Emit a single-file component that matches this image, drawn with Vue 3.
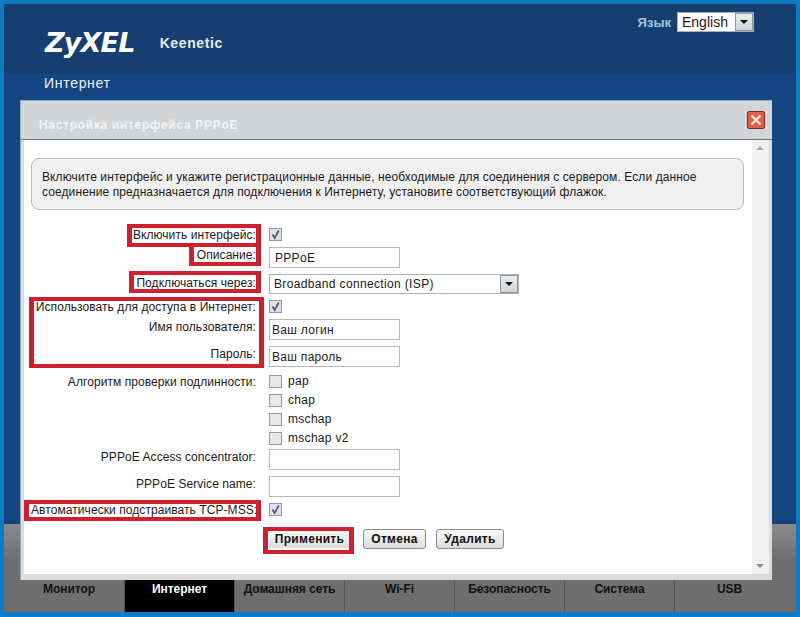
<template>
  <div class="page">
    <header class="top">
      <div class="brand">
        <span class="logo">ZyXEL</span>
        <span class="model">Keenetic</span>
      </div>
      <div class="lang">
        <span class="lang-label">Язык</span>
        <div class="select lang-select">
          <span class="select-text">English</span>
          <span class="select-arrow"><i></i></span>
        </div>
      </div>
    </header>

    <div class="content">
      <div class="section-title">Интернет</div>
    </div>

    <div class="footer">
      <nav class="tabs">
        <div
          v-for="tab in tabs"
          :key="tab"
          class="tab"
          :class="{ active: tab === 'Интернет' }"
        >
          {{ tab }}
        </div>
      </nav>
    </div>

    <div class="dialog">
      <div class="dialog-title">
        <span>Настройка интерфейса PPPoE</span>
        <button class="close">
          <svg width="14" height="14" viewBox="0 0 14 14">
            <path d="M2.5 2.5L11.5 11.5M11.5 2.5L2.5 11.5" stroke="#fbe6df" stroke-width="2.4" fill="none" />
          </svg>
        </button>
      </div>

      <div class="dialog-body">
        <div class="scroll-content">
          <div class="hint">
            Включите интерфейс и укажите регистрационные данные, необходимые для соединения с сервером. Если данное соединение предназначается для подключения к Интернету, установите соответствующий флажок.
          </div>

          <div class="form">
            <div
              v-for="row in rows"
              :key="row.id"
              class="row"
              :class="['gap' + row.gap, { 'input-row': row.type === 'input', 'select-row': row.type === 'select' }]"
            >
              <label class="label">{{ row.label }}</label>
              <div class="control">
                <template v-if="row.type === 'check'">
                  <span class="check" :class="{ on: row.on }">
                    <svg v-if="row.on" width="11" height="11" viewBox="0 0 11 11">
                      <path d="M2.5 5.5L4.6 9L8.8 1.5" stroke="#4a5a78" stroke-width="1.7" fill="none" />
                    </svg>
                  </span>
                  <span v-if="row.text" class="check-text">{{ row.text }}</span>
                </template>
                <div v-else-if="row.type === 'input'" class="input" :class="{ inset: row.inset }">{{ row.value }}</div>
                <div v-else class="select form-select">
                  <span class="select-text">{{ row.value }}</span>
                  <span class="select-arrow"><i></i></span>
                </div>
              </div>
            </div>

            <div class="actions">
              <button class="btn apply">Применить</button>
              <button class="btn cancel">Отмена</button>
              <button class="btn remove">Удалить</button>
            </div>
          </div>
        </div>

        <div class="scrollbar">
          <i class="up"></i>
          <i class="down"></i>
        </div>
      </div>

      <!-- red annotations drawn on top of the screenshot -->
      <div class="mark m1"></div>
      <div class="mark m2"></div>
      <div class="mark m3"></div>
      <div class="mark m4"></div>
      <div class="mark m5"></div>
      <div class="mark m6"></div>
    </div>
  </div>
</template>

<script setup>
const tabs = ["Монитор", "Интернет", "Домашняя сеть", "Wi-Fi", "Безопасность", "Система", "USB"];

const rows = [
  { id: 1, gap: 0, label: "Включить интерфейс:", type: "check", on: true },
  { id: 2, gap: 4, label: "Описание:", type: "input", value: "PPPoE", inset: true },
  { id: 3, gap: 8, label: "Подключаться через:", type: "select", value: "Broadband connection (ISP)" },
  { id: 4, gap: 3, label: "Использовать для доступа в Интернет:", type: "check", on: true },
  { id: 5, gap: 4, label: "Имя пользователя:", type: "input", value: "Ваш логин" },
  { id: 6, gap: 8, label: "Пароль:", type: "input", value: "Ваш пароль" },
  { id: 7, gap: 6, label: "Алгоритм проверки подлинности:", type: "check", text: "pap" },
  { id: 8, gap: 0, label: "", type: "check", text: "chap" },
  { id: 9, gap: 0, label: "", type: "check", text: "mschap" },
  { id: 10, gap: 0, label: "", type: "check", text: "mschap v2" },
  { id: 11, gap: 2, label: "PPPoE Access concentrator:", type: "input", value: "" },
  { id: 12, gap: 8, label: "PPPoE Service name:", type: "input", value: "" },
  { id: 13, gap: 4, label: "Автоматически подстраивать TCP-MSS:", type: "check", on: true },
];
</script>

<style>
html,
body {
  margin: 0;
  background: #0e7cc2;
}
</style>

<style scoped>
.page {
  position: relative;
  box-sizing: border-box;
  width: 800px;
  height: 617px;
  padding: 4px 4px 5px;
  display: flex;
  flex-direction: column;
  background: #0e7cc2;
  font-family: "Liberation Sans", Arial, sans-serif;
  font-size: 12px;
  color: #1a1a1a;
  overflow: hidden;
}

.top {
  height: 69px;
  flex: none;
  box-sizing: border-box;
  display: flex;
  justify-content: space-between;
  align-items: flex-start;
  background: #163f70;
  padding: 8px 42px 0 41px;
}

.brand {
  display: flex;
  align-items: center;
  margin-top: 16px;
  gap: 25px;
}

.logo {
  font-family: "DejaVu Sans", sans-serif;
  font-weight: 700;
  font-style: italic;
  font-size: 27px;
  letter-spacing: -0.8px;
  line-height: 30px;
  color: #fff;
}

.model {
  color: #e6eef5;
  font-weight: 700;
  font-size: 14px;
  letter-spacing: 0.6px;
}

.lang {
  display: flex;
  align-items: center;
  gap: 6px;
}

.lang-label {
  color: #a4c2e0;
  font-weight: 700;
  font-size: 13px;
}

.select {
  box-sizing: border-box;
  display: flex;
  align-items: center;
  justify-content: space-between;
  background: #fff;
  border: 1px solid #a8b0b8;
  font-size: 14px;
  color: #1a1a1a;
}

.lang-select {
  width: 77px;
  height: 20px;
  padding-left: 4px;
}

.select-arrow {
  box-sizing: border-box;
  width: 18px;
  height: 100%;
  display: flex;
  align-items: center;
  justify-content: center;
  background: linear-gradient(#eceef1, #cfd3d9);
  border: 1px solid #8a95a3;
}

.select-arrow i {
  border-left: 4px solid transparent;
  border-right: 4px solid transparent;
  border-top: 4px solid #111;
}

.content {
  flex: 1;
  background: #144582;
  padding-left: 40px;
}

.section-title {
  color: #eef3f8;
  font-size: 14px;
  letter-spacing: 0.7px;
  line-height: 20px;
}

.footer {
  height: 88px;
  flex: none;
  display: flex;
  align-items: flex-end;
  background: linear-gradient(#8a8a8a, #6e6e6e 40%);
}

.tabs {
  display: grid;
  grid-template-columns: repeat(7, 110px);
  margin-left: 10px;
  height: 32px;
}

.tab {
  box-sizing: border-box;
  border-left: 1px solid #555;
  padding-top: 2px;
  text-align: center;
  font-weight: 700;
  font-size: 12px;
  letter-spacing: -0.05px;
  line-height: 15px;
  color: #111;
}

.tab:first-child {
  border-left: 0;
}

.tab.active {
  background: #000;
  color: #fff;
}

.dialog {
  position: absolute;
  left: 20px;
  top: 100px;
  width: 752px;
  height: 480px;
  box-sizing: border-box;
  display: flex;
  flex-direction: column;
  background: #dcdcdc;
  border-top: 1px solid #8fa9bd;
  border-left: 1px solid #8fa9bd;
}

.dialog-title {
  height: 39px;
  flex: none;
  box-sizing: border-box;
  display: flex;
  align-items: center;
  justify-content: space-between;
  padding: 10px 7px 0 18px;
  background: #d3d6d8;
  border-bottom: 1px solid #5d7282;
  color: #f2f4f5;
  font-weight: 700;
  font-size: 12px;
  letter-spacing: 0.7px;
}

.close {
  width: 18px;
  height: 18px;
  margin-top: -10px;
  padding: 0;
  display: flex;
  align-items: center;
  justify-content: center;
  background: #df5f4b;
  border: 1px solid #7e2a1e;
  border-radius: 2px;
}

.dialog-body {
  flex: 1;
  min-height: 0;
  display: flex;
  margin: 0 3px 6px 3px;
  background: #fff;
}

.scroll-content {
  flex: 1;
  min-width: 0;
  padding: 18px 6px 0 7px;
}

.hint {
  box-sizing: border-box;
  width: 713px;
  height: 52px;
  padding: 11px 10px 0;
  background: #f0f0f0;
  border: 1px solid #bbb;
  border-radius: 8px;
  font-size: 12px;
  line-height: 15px;
  letter-spacing: 0.1px;
}

.form {
  margin-top: 14.5px;
}

.row {
  display: flex;
  align-items: center;
  height: 19px;
}

.gap2 { margin-top: 2px; }
.gap3 { margin-top: 3px; }
.gap4 { margin-top: 4px; }
.gap6 { margin-top: 6px; }
.gap8 { margin-top: 8px; }

.label {
  width: 225px;
  flex: none;
  text-align: right;
  white-space: nowrap;
  letter-spacing: 0.07px;
  line-height: 14px;
  padding-top: 1px;
}

.input-row .label {
  padding-top: 0;
  padding-bottom: 4px;
}

.select-row .label {
  padding-top: 0;
  padding-bottom: 3px;
}

.control {
  margin-left: 13px;
  display: flex;
  align-items: center;
}

.check {
  box-sizing: border-box;
  width: 13px;
  height: 13px;
  display: flex;
  align-items: center;
  justify-content: center;
  background: #e8e8e8;
  border: 1px solid #999;
}

.check.on {
  background: #dfe3ea;
  border-color: #8f99a4;
}

.check-text {
  margin-left: 6px;
  letter-spacing: 0.3px;
}

.input {
  box-sizing: border-box;
  width: 131px;
  height: 21px;
  padding-left: 2px;
  background: #fff;
  border: 1px solid #b9b9b9;
  font-size: 12px;
  line-height: 21px;
  letter-spacing: 0.3px;
}

.input.inset {
  padding-left: 5px;
}

.form-select {
  width: 250px;
  height: 20px;
  padding-left: 4px;
  font-size: 12px;
  letter-spacing: 0.35px;
  border-color: #b0b0b0;
}

.actions {
  display: flex;
  align-items: center;
  gap: 10px;
  margin: 8px 0 0 238px;
  height: 24px;
}

.btn {
  box-sizing: border-box;
  height: 20px;
  padding: 0;
  font-family: inherit;
  font-weight: 700;
  font-size: 12px;
  letter-spacing: 0.3px;
  color: #111;
  background: linear-gradient(#fafafa, #dcdcdc);
  border: 1px solid #8a8a8a;
  border-radius: 3px;
}

.apply {
  width: 81px;
  border-color: transparent;
  margin-right: 3px;
}

.cancel {
  width: 63px;
}

.remove {
  width: 68px;
}

.scrollbar {
  position: relative;
  width: 17px;
  flex: none;
  background: #f0f0f0;
}

.scrollbar i {
  position: absolute;
  left: 4px;
  border-left: 4px solid transparent;
  border-right: 4px solid transparent;
}

.up {
  top: 6px;
  border-bottom: 4px solid #a9a9a9;
}

.down {
  bottom: 6px;
  border-top: 4px solid #8f8f8f;
}

.mark {
  position: absolute;
  box-sizing: border-box;
  border: solid #cf2030;
  border-width: 4px 5px;
}

.m1 { left: 106px; top: 123px; width: 134px; height: 23px; }
.m2 { left: 168px; top: 146px; width: 72px; height: 19px; border-top-width: 0; }
.m3 { left: 108px; top: 170px; width: 132px; height: 22px; }
.m4 { left: 8px; top: 196px; width: 235px; height: 71px; }
.m5 { left: 3px; top: 399px; width: 237px; height: 21px; }
.m6 { left: 242px; top: 426px; width: 91px; height: 27px; }
</style>
